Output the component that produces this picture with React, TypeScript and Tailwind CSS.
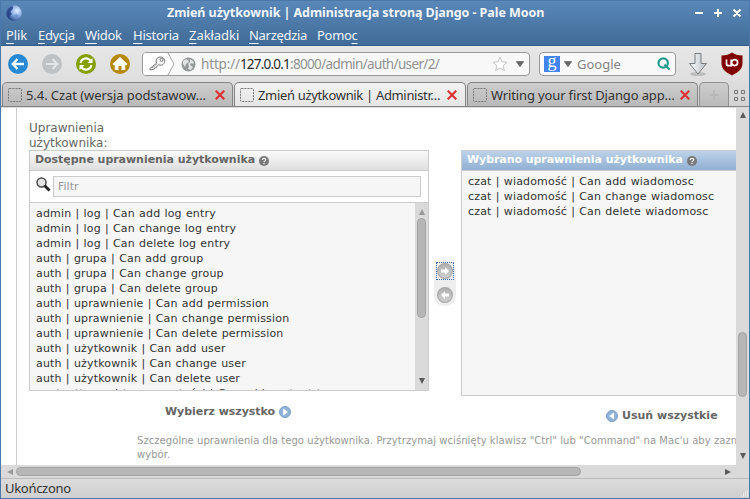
import React from "react";

const ui = "font-['Noto_Sans','Open_Sans',sans-serif]";

const menu = [
  { a: "", u: "P", b: "lik", c: "w-8 tracking-[-0.1px]" },
  { a: "", u: "E", b: "dycja", c: "w-[47px] tracking-[-0.35px]" },
  { a: "", u: "W", b: "idok", c: "w-12 tracking-[-0.3px]" },
  { a: "", u: "H", b: "istoria", c: "w-14 tracking-[-0.25px]" },
  { a: "", u: "Z", b: "akładki", c: "w-[60px] tracking-[-0.05px]" },
  { a: "", u: "N", b: "arzędzia", c: "w-[68px] tracking-[-0.3px]" },
  { a: "Pomo", u: "c", b: "", c: "w-12 tracking-[-0.3px]" },
];

const available = [
  "admin | log | Can add log entry",
  "admin | log | Can change log entry",
  "admin | log | Can delete log entry",
  "auth | grupa | Can add group",
  "auth | grupa | Can change group",
  "auth | grupa | Can delete group",
  "auth | uprawnienie | Can add permission",
  "auth | uprawnienie | Can change permission",
  "auth | uprawnienie | Can delete permission",
  "auth | użytkownik | Can add user",
  "auth | użytkownik | Can change user",
  "auth | użytkownik | Can delete user",
  "contenttypes | typ zawartości | Can add content type",
];

const chosen = [
  "czat | wiadomość | Can add wiadomosc",
  "czat | wiadomość | Can change wiadomosc",
  "czat | wiadomość | Can delete wiadomosc",
];

function WindowBar() {
  return (
    <header className="h-[46px] shrink-0 border-t border-[#4978a9] border-b border-b-[#345c8a] bg-linear-to-b from-[#5988b8] to-[#416b98] text-[#f1f5f9]">
      <div className="flex h-[23px] items-center">
        <svg className="ml-[5px] h-4 w-4 shrink-0" viewBox="0 0 16 16">
          <defs>
            <radialGradient id="moon" cx=".7" cy=".35" r=".8">
              <stop offset="0" stopColor="#dcecff" />
              <stop offset=".45" stopColor="#8aaee6" />
              <stop offset="1" stopColor="#102c70" />
            </radialGradient>
          </defs>
          <circle cx="8" cy="8" r="7.7" fill="url(#moon)" />
          <path d="M6 1C1 3 0 9 3 13c1-2 1-3 3-4-2-1-2-3 0-4 1-1 2-3 0-4Z" fill="#1d397e" opacity=".75" />
          <path d="M8 10l3-1 2 2-3 3-2-1Z" fill="#688cc5" opacity=".7" />
        </svg>
        <div className="flex-1 pl-[145px] text-[12.5px] font-bold leading-[22px] whitespace-nowrap">
          <span className="tracking-[-0.07px]">Zmień użytkownik | Administracja stroną Django - Pale Moon</span>
        </div>
        <svg className="mr-[7px] h-4 w-[47px] shrink-0" viewBox="0 0 47 16" stroke="#fff" strokeWidth="2">
          <path d="M0 8h8M19 8h8M23 4v8M38.500 4.500l7 7M45.500 4.500l-7 7" />
        </svg>
      </div>
      <nav className="flex h-[22px] items-center pt-px pl-[5px] text-[13px]">
        {menu.map((m) => (
          <span key={m.u + m.b} className={"shrink-0 leading-[21px] whitespace-nowrap " + m.c}>
            {m.a}
            <span className="underline underline-offset-[3px] decoration-1">{m.u}</span>
            {m.b}
          </span>
        ))}
      </nav>
    </header>
  );
}

function Caret() {
  return (
    <svg className="h-[6px] w-2 shrink-0" viewBox="0 0 8 6">
      <path d="M.3.5h7.4L4 5.6Z" fill="#666" stroke="#555" strokeWidth=".6" />
    </svg>
  );
}

function Toolbar() {
  return (
    <div className="flex h-[36px] shrink-0 items-center bg-linear-to-b from-[#e7e7e7] to-[#dedede] pl-[7px]">
      <svg className="h-5 w-[122px] shrink-0" viewBox="0 0 122 20" fill="none" stroke="#fff" strokeWidth="2">
        <circle cx="10" cy="10" r="10" fill="#2789d4" stroke="none" />
        <path d="M16 10H5M9.500 5L4.700 10l4.800 5" strokeWidth="2.300" />
        <circle cx="44" cy="10" r="10" fill="#bfc2c4" stroke="none" />
        <path d="M38 10h11M44.500 5l4.800 5-4.800 5" stroke="#e3e5e6" strokeWidth="2.200" />
        <circle cx="78" cy="10" r="10" fill="#83a000" stroke="none" />
        <path d="M72.500 9a5.700 5.700 0 0 1 10-2.500M83.500 11a5.700 5.700 0 0 1-10 2.500" />
        <path d="M84.500 4v5h-5ZM71.500 16v-5h5Z" fill="#fff" stroke="none" />
        <circle cx="112" cy="10" r="10" fill="#b78908" stroke="none" />
        <path d="M112 3l7.500 7-1 1.200h-1.300V16h-3.700v-4h-3v4h-3.700v-4.800h-1.300l-1-1.200Z" fill="#fff" stroke="none" />
      </svg>
      <div className="ml-[12px] flex h-6 w-[388px] shrink-0 items-center overflow-hidden rounded-[4px] border border-[#999] bg-[#f8f8f8]">
        <svg className="h-[22px] w-8 shrink-0" viewBox="0 0 32 22" fill="none">
          <path d="M0 0h24l7 11-7 11H0Z" fill="#fff" />
          <path d="M25 0l6 11-6 11" stroke="#aaa" />
          <path d="M13.600 10.200c-1.600-3 .4-6.200 3.600-6.200 4 0 5.600 3.600 3.800 6.400-1.300 1.900-3.400 2.200-5.200 1.400l-1.800 1.400-.6 1.400-1.600.2-.6 1.300-4 1-.4-1.600Z" fill="#f3f3f3" stroke="#777" />
          <circle cx="18.600" cy="6.800" r="1.500" stroke="#777" />
          <path d="M8.500 15.300l5.500-4.300" stroke="#aaa" />
        </svg>
        <svg className="ml-[6px] h-[15px] w-[15px] shrink-0" viewBox="0 0 15 15">
          <circle cx="7.500" cy="7.500" r="7" fill="#949899" />
          <path d="M2 4l3-2 2 1 1 2-3 2-1 3-2-3ZM9 2l4 3-1 2-2-1-1 2 3 2-2 3-3-1 1-3-1-2 2-2Z" fill="#e1e3e3" />
        </svg>
        <span className="ml-[5px] flex-1 text-[13.5px] leading-[20px] tracking-[-0.16px] text-[#929292] whitespace-nowrap">
          http://<span className="tracking-[-0.8px] text-[#292929]">127.0.0.1</span>
          <span className="tracking-[-0.65px]">:8000/admin/auth/user/2/</span>
        </span>
        <svg className="h-4 w-4 shrink-0" viewBox="0 0 16 16">
          <path d="M8 1l2 4.800 5 .4-3.800 3.400 1.200 5L8 12l-4.400 2.600 1.200-5L1 6.200l5-.4Z" fill="#fff" stroke="#c3c3c3" />
        </svg>
        <div className="mr-[5px] ml-2 flex"><Caret /></div>
      </div>
      <div className="ml-[9px] flex h-6 w-[137px] shrink-0 items-center rounded-[4px] border border-[#999] bg-[#f9f9f9] pl-1">
        <span className="flex h-4 w-4 shrink-0 items-center justify-center bg-[#4384ee] font-['Liberation_Serif',serif] text-[18px] leading-none text-white">
          <span className="-mt-1.5">g</span>
        </span>
        <div className="ml-[4px] flex"><Caret /></div>
        <span className="ml-[5px] flex-1 text-[13px] leading-[20px] tracking-[0px] text-[#858585]">Google</span>
        <svg className="mr-[4px] h-[14px] w-[14px]" viewBox="0 0 14 14" fill="none" stroke="#239b8d" strokeWidth="2.200">
          <circle cx="6.200" cy="6" r="4.700" /><path d="M7.500 7.500l5 5" />
        </svg>
      </div>
      <svg className="ml-[12px] h-[25px] w-[20px] shrink-0" viewBox="0 0 20 25">
        <defs><linearGradient id="down" x2="1"><stop stopColor="#fff" /><stop offset="1" stopColor="#b8c0c5" /></linearGradient></defs>
        <ellipse cx="10" cy="22" rx="8" ry="2" fill="#bdbdbd" />
        <path d="M7 1.500h6v10h5.500L10 22 1.500 11.500H7Z" fill="url(#down)" stroke="#777d80" />
      </svg>
      <svg className="ml-[13px] h-[24px] w-[22px] shrink-0" viewBox="0 0 22 24">
        <path d="M11 .5c3 2 6 3 10.500 3v8c0 6-5 9-10.500 12C5.500 20.500.500 17.500.500 11.500v-8C5 3.500 8 2.500 11 .5Z" fill="#800000" />
        <path d="M5.500 7.500v4.200a2 2 0 0 0 2 2h2.700V7.500" fill="none" stroke="#fff" strokeWidth="1.700" />
        <circle cx="13.600" cy="10.600" r="3" fill="#800000" stroke="#fff" strokeWidth="1.700" />
      </svg>
    </div>
  );
}

const tabs = [
  { t: "5.4. Czat (wersja podstawow…", c: "w-[231px] bg-linear-to-b from-[#cdcdcd] to-[#b9b9b9]", s: "w-[189px] tracking-[-0.07px]" },
  { t: "Zmień użytkownik | Administr…", c: "ml-px w-[232px] bg-linear-to-b from-[#f2f2f2] to-[#e5e5e5]", s: "w-[189px] tracking-[-0.33px]" },
  { t: "Writing your first Django app…", c: "ml-px w-[231px] bg-linear-to-b from-[#cdcdcd] to-[#b9b9b9]", s: "w-[189px] tracking-[-0.14px]" },
];

function Tabs() {
  return (
    <div className="flex h-[25px] shrink-0 items-end border-b border-[#858585] bg-linear-to-b from-[#dedede] to-[#d3d3d3] pl-px">
      {tabs.map((tab) => (
        <div key={tab.t} className={"flex h-6 shrink-0 items-center rounded-t-[5px] border border-b-0 border-[#838383] pl-[5px] " + tab.c}>
          <svg className="h-[14px] w-[14px] shrink-0" viewBox="0 0 14 14">
            <rect x=".5" y=".5" width="13" height="13" rx="1" fill="none" stroke="#777" strokeDasharray="2 1" />
          </svg>
          <span className={"ml-[4px] shrink-0 text-[13px] leading-[22px] text-[#333] whitespace-nowrap " + tab.s}>{tab.t}</span>
          <svg className="h-[10px] w-[10px] shrink-0" viewBox="0 0 10 10">
            <path d="M.7.7l8.600 8.600M9.300.7L.7 9.300" stroke="#dc3434" strokeWidth="2.200" />
          </svg>
        </div>
      ))}
      <div className="ml-px flex h-6 w-[30px] shrink-0 items-center justify-center rounded-t-[5px] border border-b-0 border-[#919191] bg-linear-to-b from-[#cdcdcd] to-[#bababa]">
        <svg className="h-3 w-3" viewBox="0 0 12 12"><path d="M6 1v10M1 6h10" stroke="#b8b8b8" strokeWidth="2" /></svg>
      </div>
      <svg className="mb-[5px] ml-[5px] h-[11px] w-[11px]" viewBox="0 0 11 11" fill="none" stroke="#777">
        <path d="M.5.5h3v3h-3ZM7.500.5h3v3h-3ZM.5 7.500h3v3h-3ZM7.500 7.500h3v3h-3Z" />
      </svg>
    </div>
  );
}

function Arrow({ className, fill = "#5a5a5a" }: { className: string; fill?: string }) {
  return (
    <svg className={"h-[6px] w-[6px] shrink-0 " + className} viewBox="0 0 6 6">
      <path d="M3 0l3 6H0Z" fill={fill} />
    </svg>
  );
}

function Help() {
  return (
    <svg className="ml-[4px] h-[10px] w-[10px] shrink-0" viewBox="0 0 10 10">
      <circle cx="5" cy="5" r="5" fill="#777" />
      <path d="M3.300 4c0-2.200 3.500-2.200 3.500-.2C6.800 5 5 4.800 5 6.200M5 7.100v1.200" stroke="#fff" strokeWidth="1.200" fill="none" />
    </svg>
  );
}

function ChooseArrow({ left = false }: { left?: boolean }) {
  return (
    <svg className="h-4 w-4" viewBox="0 0 16 16">
      <defs><linearGradient id="grey" x2="0" y2="1"><stop stopColor="#b0b0b0" /><stop offset="1" stopColor="#d0d0d0" /></linearGradient></defs>
      <circle cx="8" cy="8" r="7.400" fill="url(#grey)" stroke="#aaa" strokeWidth="1.200" />
      <path d={left ? "M4 8l4-4v2.500h4v3H8V12Z" : "M12 8L8 4v2.500H4v3h4V12Z"} fill="#fff" />
    </svg>
  );
}

function AllArrow({ left = false }: { left?: boolean }) {
  return (
    <svg className="h-3 w-3 shrink-0" viewBox="0 0 12 12">
      <circle cx="6" cy="6" r="5.500" fill="#91b2d4" stroke="#779fc8" />
      <path d={left ? "M8 2.500v7L3.200 6Z" : "M4.200 2.500v7L9 6Z"} fill="#fff" />
    </svg>
  );
}

function Available() {
  return (
    <section className="h-[241px] w-[400px] shrink-0 border border-[#ccc]">
      <h2 className="flex h-5 items-center border-b border-[#ccc] bg-linear-to-b from-[#fafafa] to-[#dfdfdf] pl-[5px] text-[11px] font-bold tracking-[-0.04px] text-[#666]">
        Dostępne uprawnienia użytkownika<Help />
      </h2>
      <div className="flex h-8 items-center border-b border-[#ccc] bg-white pl-[6px]">
        <svg className="mb-1 h-[15px] w-[15px] shrink-0" viewBox="0 0 15 15">
          <circle cx="5.500" cy="5.500" r="4.500" fill="#e4e4e4" stroke="#4c4c4c" strokeWidth="1.500" />
          <path d="M8.500 8.500l5 5" stroke="#222" strokeWidth="2.800" />
        </svg>
        <div className="ml-[2px] h-[21px] w-[368px] border border-[#ccc] bg-[#f6f6f6] pl-[4px] text-[11px] leading-[20px] text-[#999]">Filtr</div>
      </div>
      <div className="flex h-[187px] overflow-hidden bg-[#f6f6f6]">
        <ul className="flex-1 pt-[3px] pl-[6px] text-[11px] leading-[15px] tracking-[0.17px] [word-spacing:0.5px] text-[#333]">
          {available.map((p) => <li key={p} className="h-[15px] whitespace-nowrap">{p}</li>)}
        </ul>
        <div className="flex w-[13px] flex-col items-center bg-[#dadada] pt-[6px] pb-[6px]">
          <Arrow className="" fill="#999" />
          <div className="mt-[3px] h-[100px] w-[9px] rounded-full border border-[#a3a3a3] bg-[#b6b6b6]" />
          <Arrow className="mt-auto rotate-180" />
        </div>
      </div>
    </section>
  );
}

function Page() {
  return (
    <div className="flex h-[358px] shrink-0 bg-white">
      <main className="flex min-w-0 flex-1 overflow-hidden border-t border-[#ddd] pl-[15px] font-['DejaVu_Sans',sans-serif]">
        <div className="w-[719px] min-w-0 flex-1 overflow-hidden border-l border-[#ccc] pl-[12px]">
          <p className="h-[42px] w-[100px] pt-[13px] text-[12px] leading-[15px] text-[#666]">Uprawnienia użytkownika:</p>
          <div className="flex">
            <div className="w-[400px] shrink-0">
              <Available />
              <div className="mt-[13px] ml-[136px] flex h-4 items-center text-[11px] font-bold tracking-[-0.05px] whitespace-nowrap text-[#666]">
                Wybierz wszystko<span className="ml-[4px]"><AllArrow /></span>
              </div>
            </div>
            <div className="mt-[110px] ml-[5px] flex h-[46px] w-[22px] shrink-0 flex-col items-center rounded-[10px] bg-[#eee] pt-[2px]">
              <div className="flex h-[18px] w-[18px] shrink-0 items-center justify-center border border-dotted border-[#3b70b0]"><ChooseArrow /></div>
              <div className="mt-[7px] h-4"><ChooseArrow left /></div>
            </div>
            <div className="ml-[5px] w-[400px] shrink-0">
              <section className="h-[246px] border border-[#ccc] bg-[#f6f6f6]">
                <h2 className="flex h-5 items-center border-b border-[#ccc] bg-linear-to-b from-[#bdd2e8] to-[#91b0d4] pl-[5px] text-[11px] font-bold tracking-[-0.06px] text-white">
                  Wybrano uprawnienia użytkownika<Help />
                </h2>
                <ul className="pt-[3px] pl-[6px] text-[11px] leading-[15px] tracking-[0.17px] [word-spacing:0.5px] text-[#333]">
                  {chosen.map((p) => <li key={p} className="whitespace-nowrap">{p}</li>)}
                </ul>
              </section>
              <div className="mt-[12px] ml-[145px] flex h-4 items-center text-[11px] font-bold whitespace-nowrap text-[#666]">
                <AllArrow left /><span className="ml-[4px]">Usuń wszystkie</span>
              </div>
            </div>
          </div>
          <p className="mt-[10px] ml-[108px] w-[660px] text-[10px] leading-[14px] tracking-[0.06px] whitespace-nowrap text-[#999]">
            Szczególne uprawnienia dla tego użytkownika. Przytrzymaj wciśnięty klawisz "Ctrl" lub "Command" na Mac'u aby zaznaczyć<br />wybór.
          </p>
        </div>
      </main>
      <div className="flex w-[13px] shrink-0 flex-col items-center bg-[#dadada] pt-[5px] pb-[6px]">
        <Arrow className="" />
        <div className="mt-[214px] h-[65px] w-[9px] rounded-full border border-[#a3a3a3] bg-[#b6b6b6]" />
        <Arrow className="mt-auto rotate-180" />
      </div>
    </div>
  );
}

export default function App() {
  return (
    <div className={"flex h-[499px] w-[750px] flex-col overflow-hidden border-x border-b border-[#4978ac] bg-[#dadada] " + ui}>
      <WindowBar />
      <Toolbar />
      <Tabs />
      <Page />
      <div className="flex h-[13px] shrink-0 items-center bg-[#dadada] pl-[6px]">
        <Arrow className="-rotate-90" fill="#999" />
        <div className="ml-[3px] h-[9px] w-[565px] rounded-full border border-[#a3a3a3] bg-[#b6b6b6]" />
        <Arrow className="mr-[18px] ml-auto rotate-90" />
      </div>
      <footer className="flex flex-1 items-center border-t border-[#bbb] bg-linear-to-b from-[#dcdcdc] to-[#cfcfcf] pl-[4px] text-[13px] leading-[19px] text-[#333]">
        <span className="-mt-px tracking-[-0.3px]">Ukończono</span>
        <svg className="mt-auto ml-auto h-2 w-[10px]" viewBox="0 0 10 8">
          <path d="M8 0h1M6 2h1M8 2h1M4 4h1M6 4h1M8 4h1M2 6h1M4 6h1M6 6h1M8 6h1" stroke="#fff" strokeWidth="1" />
        </svg>
      </footer>
    </div>
  );
}
